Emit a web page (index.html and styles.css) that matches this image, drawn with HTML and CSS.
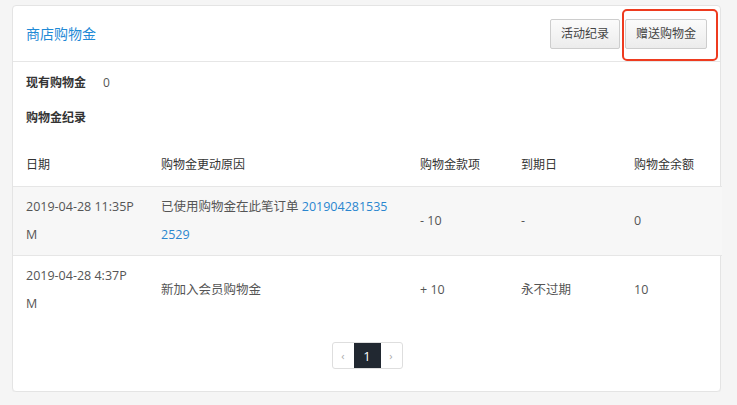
FILE: index.html
```html
<!DOCTYPE html>
<html lang="zh">
<head>
<meta charset="utf-8">
<title>商店购物金</title>
<link rel="stylesheet" href="styles.css">
</head>
<body>
<div class="card">
  <div class="card-header">
    <div class="title">商店购物金</div>
    <div class="actions">
      <button class="btn">活动纪录</button>
      <span class="highlight-wrap">
        <button class="btn">赠送购物金</button>
        <span class="highlight"></span>
      </span>
    </div>
  </div>
  <div class="card-body">
    <div class="summary"><span class="label">现有购物金</span><span class="value">0</span></div>
    <div class="section-title">购物金纪录</div>
    <table class="records">
      <colgroup>
        <col class="c-date"><col class="c-reason"><col class="c-amount"><col class="c-expire"><col class="c-balance">
      </colgroup>
      <thead>
        <tr><th>日期</th><th>购物金更动原因</th><th>购物金款项</th><th>到期日</th><th>购物金余额</th></tr>
      </thead>
      <tbody>
        <tr class="shaded">
          <td class="date">2019-04-28 11:35PM</td>
          <td class="reason">已使用购物金在此笔订单 <a class="link" href="#">2019042815352529</a></td>
          <td>- 10</td>
          <td>-</td>
          <td>0</td>
        </tr>
        <tr class="last">
          <td class="date">2019-04-28 4:37PM</td>
          <td class="reason">新加入会员购物金</td>
          <td>+ 10</td>
          <td>永不过期</td>
          <td>10</td>
        </tr>
      </tbody>
    </table>
    <div class="pager-row">
      <div class="pager">
        <span class="pg arrow">‹</span>
        <span class="pg active">1</span>
        <span class="pg arrow">›</span>
      </div>
    </div>
  </div>
</div>
</body>
</html>
```
FILE: styles.css
```css
html, body {
  margin: 0;
  padding: 0;
  background: #f5f5f5;
}
body {
  font-family: "Open Sans", "Noto Sans CJK SC", sans-serif;
  color: #555;
  padding: 5px 16px 0 12px;
}
.card {
  background: #fff;
  border: 1px solid #e4e4e4;
  border-radius: 4px;
  box-shadow: 0 1px 1px rgba(0,0,0,0.03);
  height: 387px;
  box-sizing: border-box;
}
.card-header {
  height: 56px;
  box-sizing: border-box;
  border-bottom: 1px solid #e6e6e6;
  display: flex;
  align-items: center;
  justify-content: space-between;
  padding: 0 13px 0 13px;
}
.title {
  font-size: 14px;
  color: #1f8ad6;
  line-height: 20px;
}
.actions {
  display: flex;
  gap: 5px;
  align-items: center;
}
.btn {
  font-family: "Open Sans", "Noto Sans CJK SC", sans-serif;
  font-size: 12px;
  color: #444;
  height: 30px;
  padding: 0 10px;
  border: 1px solid #cdcdcd;
  border-radius: 2px;
  background: linear-gradient(#fbfbfb, #ececec);
  line-height: 28px;
}
.highlight-wrap {
  position: relative;
  display: inline-flex;
}
.highlight {
  position: absolute;
  left: -3px;
  top: -10px;
  right: -11px;
  bottom: -12px;
  border: 2px solid #ee3b1f;
  border-radius: 5px;
}
.card-body {
  padding-top: 11px;
}
.summary, .section-title {
  padding: 0 13px;
  line-height: 20px;
  font-size: 12px;
}
.label, .section-title {
  font-weight: 700;
  color: #333;
}
.label {
  margin-right: 17px;
}
.value {
  color: #555;
}
.section-title {
  margin-top: 15px;
}
.records {
  margin-top: 16px;
  width: 100%;
  border-collapse: collapse;
  table-layout: fixed;
}
.c-date { width: 135px; }
.c-reason { width: 259px; }
.c-amount { width: 101px; }
.c-expire { width: 113px; }
.c-balance { width: 101px; }
.records th {
  text-align: left;
  font-weight: 400;
  font-size: 12px;
  color: #333;
  line-height: 20px;
  padding: 11px 12px 11px 13px;
  border-bottom: 1px solid #e6e6e6;
}
.records td {
  font-size: 12.5px;
  line-height: 28px;
  padding: 6px 12px 6px 13px;
  vertical-align: middle;
  word-break: break-all;
  border-bottom: 1px solid #e6e6e6;
}
.records td.reason {
  padding-right: 17px;
}
.records tr.shaded td {
  background: #f7f7f7;
}
.records tr.last td {
  border-bottom: none;
}
.link {
  color: #2a86cf;
  text-decoration: none;
}
.pager-row {
  display: flex;
  justify-content: center;
  margin-top: 18px;
  padding-left: 1px;
}
.pager {
  display: flex;
  border: 1px solid #dedede;
  border-radius: 3px;
  overflow: hidden;
  height: 27px;
  box-sizing: border-box;
}
.pg {
  display: flex;
  align-items: center;
  justify-content: center;
}
.arrow {
  width: 21px;
  color: #aaa;
  font-size: 11px;
}
.active {
  width: 27px;
  background: #212831;
  color: #fff;
  font-size: 13px;
}
```
